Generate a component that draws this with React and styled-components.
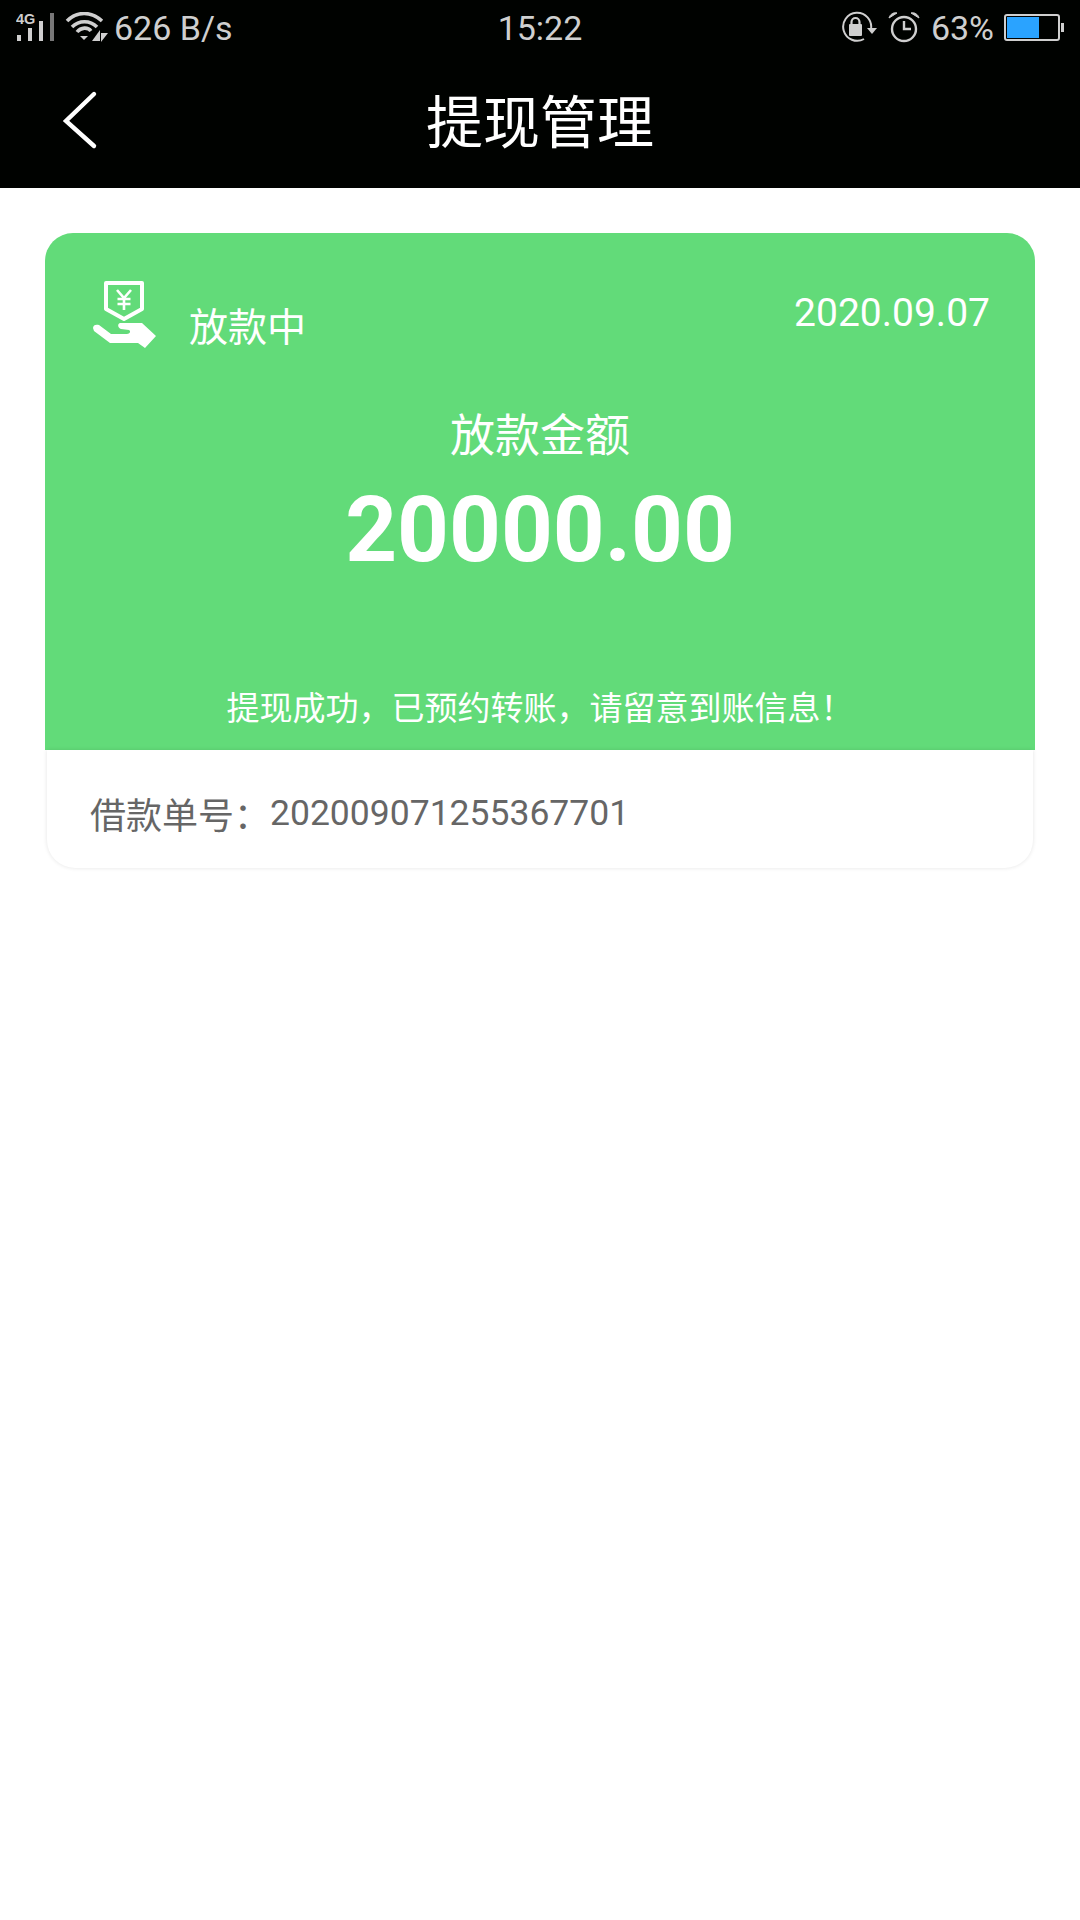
import React from 'react';
import styled, { createGlobalStyle } from 'styled-components';

const GlobalStyle = createGlobalStyle`
  html, body {
    margin: 0;
    padding: 0;
    background: #fff;
    font-family: Roboto, "Noto Sans CJK SC", sans-serif;
  }
`;

const NOTICE = '提现成功\uFF0C已预约转账\uFF0C请留意到账信息\uFF01';
const ORDER_LABEL = '借款单号\uFF1A';

const Page = styled.div`
  width: 1080px;
  height: 1920px;
  overflow: hidden;
  background: #fff;
`;

const Header = styled.header`
  height: 188px;
  background: #000200;
  display: flex;
  flex-direction: column;
`;

const StatusBar = styled.div`
  height: 56px;
  padding: 0 16px;
  display: grid;
  grid-template-columns: 1fr auto 1fr;
  align-items: center;
  color: #cfcfcf;
  font-size: 34px;
`;

const StatusGroup = styled.div`
  display: flex;
  align-items: center;
  justify-content: ${({ $end }) => ($end ? 'flex-end' : 'flex-start')};
`;

const Speed = styled.span`
  margin-left: 6px;
`;

const Percent = styled.span`
  margin: 0 10px 0 11px;
`;

const NavBar = styled.div`
  flex: 1;
  position: relative;
  display: flex;
  align-items: center;
  justify-content: center;
  padding-top: 3px;
`;

const BackIcon = styled.svg`
  position: absolute;
  left: 60px;
  top: 33px;
`;

const Title = styled.h1`
  margin: 0;
  color: #fff;
  font-size: 57px;
  font-weight: 400;
  line-height: 1;
`;

const Content = styled.main`
  padding: 45px;
`;

const Card = styled.section`
  display: flex;
  flex-direction: column;
`;

const GreenPanel = styled.div`
  height: 517px;
  background: #62db79;
  color: #fff;
  border-radius: 28px 28px 0 0;
  display: flex;
  flex-direction: column;
  align-items: center;
  box-sizing: border-box;
  padding: 48px 45px 0;
`;

const TopRow = styled.div`
  align-self: stretch;
  display: flex;
  justify-content: space-between;
  align-items: flex-start;
`;

const Status = styled.div`
  display: flex;
  align-items: flex-start;
  gap: 32px;
  margin-left: 3px;
  font-size: 39px;
  line-height: 56px;
`;

const StatusLabel = styled.span`
  margin-top: 19px;
`;

const DateText = styled.div`
  font-size: 39px;
  line-height: 46px;
  margin-top: 9px;
`;

const AmountLabel = styled.div`
  margin-top: 51px;
  font-size: 45px;
  line-height: 60px;
`;

const Amount = styled.div`
  margin-top: 13px;
  font-size: 90.5px;
  font-weight: 700;
  line-height: 100px;
`;

const Notice = styled.div`
  margin-top: 107px;
  font-size: 33px;
  line-height: 44px;
`;

const OrderRow = styled.div`
  height: 118px;
  margin: 0 2px;
  box-sizing: border-box;
  padding: 7px 0 0 43px;
  display: flex;
  align-items: center;
  color: #666;
  font-size: 36px;
  border-radius: 0 0 28px 28px;
  box-shadow: 0 0 4px rgba(0, 0, 0, 0.11);
`;

const OrderNumber = styled.span`
  font-size: 35.5px;
`;

const SignalIcon = () => (
  <svg width="40" height="32" viewBox="0 0 40 32">
    <text x="0" y="12" fill="#cfcfcf" fontFamily="Liberation Sans" fontSize="14.5" fontWeight="700">4G</text>
    <rect x="1" y="23" width="4" height="6" fill="#cfcfcf" />
    <rect x="12" y="16" width="4" height="13" fill="#cfcfcf" />
    <rect x="23" y="9" width="4" height="20" fill="#cfcfcf" />
    <rect x="34" y="1" width="4" height="28" fill="#777" />
  </svg>
);

const WifiIcon = () => (
  <svg width="44" height="32" viewBox="0 0 44 32" fill="none" style={{ marginLeft: 8 }}>
    <path d="M3 9C13 -1 27 -1 38 9" stroke="#cfcfcf" strokeWidth="3.6" />
    <path d="M8 15C15 8 26 8 33 15" stroke="#cfcfcf" strokeWidth="3.6" />
    <path d="M13 20C17 15 24 15 27 19" stroke="#cfcfcf" strokeWidth="3.6" />
    <path d="M16 24H24L20 28Z" fill="#cfcfcf" />
    <path d="M36 18V29H28Z" fill="#cfcfcf" />
    <path d="M37 19V30L44 21H37Z" fill="#cfcfcf" />
  </svg>
);

const RotateLockIcon = () => (
  <svg width="38" height="34" viewBox="0 -1 38 34" fill="none">
    <path d="M23 27A14 14 0 1 1 30 17" stroke="#cfcfcf" strokeWidth="2" />
    <rect x="8" y="12" width="13" height="12" rx="1" fill="#cfcfcf" />
    <path d="M10.5 12V10A4 4 0 0 1 18.5 10V12" stroke="#cfcfcf" strokeWidth="2.2" />
    <path d="M26 16H36L31 22Z" fill="#cfcfcf" />
  </svg>
);

const AlarmIcon = () => (
  <svg width="32" height="32" viewBox="0 0 32 32" fill="none" style={{ marginLeft: 9 }}>
    <circle cx="16" cy="17" r="12" stroke="#cfcfcf" strokeWidth="2.4" />
    <path d="M16 9V17H23" stroke="#cfcfcf" strokeWidth="2.4" />
    <path d="M1 6C2 2 6 0 9 1Z" fill="#cfcfcf" stroke="#cfcfcf" />
    <path d="M31 6C30 2 26 0 23 1Z" fill="#cfcfcf" stroke="#cfcfcf" />
  </svg>
);

const BatteryIcon = () => (
  <svg width="60" height="28" viewBox="0 0 60 28" fill="none">
    <rect x="1" y="1" width="54" height="25" rx="2" stroke="#cfcfcf" strokeWidth="2" />
    <rect x="3" y="3" width="32" height="21" fill="#2aa3ff" />
    <rect x="57" y="9" width="3" height="9" fill="#cfcfcf" />
  </svg>
);

const LoanIcon = () => (
  <svg width="64" height="68" viewBox="0 0 64 68" fill="none">
    <path d="M13 2H49V28L31 38L13 28Z" stroke="#fff" strokeWidth="4" strokeLinejoin="round" />
    <path d="M24 9L31 17L38 9M31 17V29M24.5 18H37.5M24.5 23H37.5" stroke="#fff" strokeWidth="2.6" />
    <path d="M0 47C0 44 3 43 6 44L18 53H34C37 53 38 50 36 49L28 48C25 47 24 43 27 42H49L63 55L52 67L45 62H17L1 50Z" fill="#fff" />
  </svg>
);

const App = () => (
  <Page>
    <GlobalStyle />
    <Header>
      <StatusBar>
        <StatusGroup>
          <SignalIcon />
          <WifiIcon />
          <Speed>626 B/s</Speed>
        </StatusGroup>
        <span>15:22</span>
        <StatusGroup $end>
          <RotateLockIcon />
          <AlarmIcon />
          <Percent>63%</Percent>
          <BatteryIcon />
        </StatusGroup>
      </StatusBar>
      <NavBar>
        <BackIcon width="38" height="62" viewBox="0 0 38 62" fill="none">
          <path d="M34 5L6 32L34 57" stroke="#fff" strokeWidth="4.4" strokeLinecap="round" />
        </BackIcon>
        <Title>提现管理</Title>
      </NavBar>
    </Header>
    <Content>
      <Card>
        <GreenPanel>
          <TopRow>
            <Status>
              <LoanIcon />
              <StatusLabel>放款中</StatusLabel>
            </Status>
            <DateText>2020.09.07</DateText>
          </TopRow>
          <AmountLabel>放款金额</AmountLabel>
          <Amount>20000.00</Amount>
          <Notice>{NOTICE}</Notice>
        </GreenPanel>
        <OrderRow>
          {ORDER_LABEL}
          <OrderNumber>202009071255367701</OrderNumber>
        </OrderRow>
      </Card>
    </Content>
  </Page>
);

export default App;
